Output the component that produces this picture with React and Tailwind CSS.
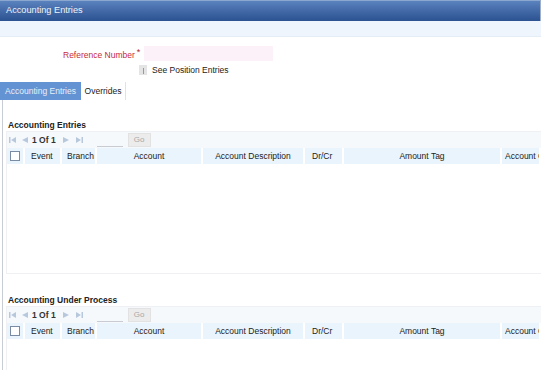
import React from 'react';

const cols = [
  { label: 'Event', w: 'w-[37px]', cls: 'pl-[6px]' },
  { label: 'Branch', w: 'w-[35px]', cls: 'pl-[5px]' },
  { label: 'Account', w: 'w-[106px]', cls: 'justify-center' },
  { label: 'Account Description', w: 'w-[102px]', cls: 'justify-center' },
  { label: 'Dr/Cr', w: 'w-[39px]', cls: 'pl-[7px]' },
  { label: 'Amount Tag', w: 'w-[158px]', cls: 'justify-center' },
  { label: 'Account Class', w: 'flex-1', cls: 'pl-[3px]' },
];

function Pager() {
  return (
    <div className="flex items-center h-[16px] bg-[#f6f9fc]">
      <svg width="7" height="8" viewBox="0 0 7 8" className="ml-[2px] shrink-0">
        <rect x="0" y="1" width="1.5" height="6" fill="#b8c8dc" />
        <path d="M7 1 L2 4 L7 7 Z" fill="#b8c8dc" />
      </svg>
      <svg width="7" height="8" viewBox="0 0 7 8" className="ml-[5px] shrink-0">
        <path d="M7 1 L1 4 L7 7 Z" fill="#b8c8dc" />
      </svg>
      <span className="ml-[4px] text-[8.5px] text-[#333] font-bold whitespace-nowrap">1 Of 1</span>
      <svg width="7" height="8" viewBox="0 0 7 8" className="ml-[7px] shrink-0">
        <path d="M0 1 L6 4 L0 7 Z" fill="#b8c8dc" />
      </svg>
      <svg width="7" height="8" viewBox="0 0 7 8" className="ml-[6px] shrink-0">
        <path d="M0 1 L5 4 L0 7 Z" fill="#b8c8dc" />
        <rect x="5.5" y="1" width="1.5" height="6" fill="#b8c8dc" />
      </svg>
      <div className="ml-[14px] w-[26px] h-[14px] border-b border-[#c8ccd2]" />
      <div className="ml-[5px] w-[23px] h-[14px] bg-[#ececec] border border-[#e2e2e2] flex items-center justify-center text-[8px] text-[#a8a8a8]">
        Go
      </div>
    </div>
  );
}

function Header() {
  return (
    <div className="flex h-[16px] bg-[#eaf4fc] text-[8.5px] text-[#222]">
      <div className="w-[18px] shrink-0 flex items-center pl-[3px] border-r-2 border-white">
        <div className="w-[10px] h-[10px] border border-[#7a8ca4] bg-white" />
      </div>
      {cols.map((c) => (
        <div
          key={c.label}
          className={`${c.w} ${c.cls} shrink-0 flex items-center whitespace-nowrap overflow-hidden border-r-2 border-white`}
        >
          {c.label}
        </div>
      ))}
    </div>
  );
}

function Grid({ title, bodyH }) {
  return (
    <div>
      <div className="h-[12px] pl-[5px] text-[8.5px] font-bold text-[#222] leading-[12px] whitespace-nowrap">{title}</div>
      <div className="ml-[3px] border border-[#eef0f3] border-r-0">
        <Pager />
        <Header />
        <div className={bodyH} />
      </div>
    </div>
  );
}

export default function App() {
  return (
    <div
      className="w-[541px] h-[370px] bg-white overflow-hidden"
      style={{ fontFamily: '"Liberation Sans", Arial, sans-serif' }}
    >
      <div className="h-[21px] bg-gradient-to-b from-[#5a82bd] to-[#2c5291] border-t border-[#8ba6cf] border-r border-r-[#9fb0c8] flex items-center pl-[6px] text-[9.2px] text-[#eef2f9] whitespace-nowrap">
        Accounting Entries
      </div>
      <div className="h-[16px] bg-[#eef5fd] border-b border-[#e4ecf5]" />

      <div className="flex items-center mt-[9px] h-[15px]">
        <span className="ml-[63px] mt-[3px] text-[8.5px] text-[#c62a3c] whitespace-nowrap">Reference Number</span>
        <span className="ml-[2px] text-[9px] text-[#b01c2c] -mt-[2px]">*</span>
        <div className="ml-[4px] w-[129px] h-[15px] bg-[#fdf1f9]" />
      </div>
      <div className="flex items-center mt-[3px] h-[12px]">
        <div className="ml-[139px] w-[8px] h-[10px] bg-[#e4e4e4] flex items-end justify-center">
          <div className="w-[1px] h-[6px] bg-[#9a9a9a] mb-[1px]" />
        </div>
        <span className="ml-[5px] text-[8.5px] text-[#222] whitespace-nowrap">See Position Entries</span>
      </div>

      <div className="flex mt-[6px] h-[18px] text-[8.5px] whitespace-nowrap">
        <div className="w-[81px] bg-[#6393d3] text-[#e8eef8] flex items-center justify-center">
          Accounting Entries
        </div>
        <div className="w-[45px] flex items-center justify-center text-[#222] border-r border-[#e2e2e2]">
          Overrides
        </div>
      </div>

      <div className="ml-[2px] border-l border-[#c8ccd4] h-[270px] pt-[19px]">
        <Grid title="Accounting Entries" bodyH="h-[109px]" />
        <div className="mt-[20px]">
          <Grid title="Accounting Under Process" bodyH="h-[40px]" />
        </div>
      </div>
    </div>
  );
}
